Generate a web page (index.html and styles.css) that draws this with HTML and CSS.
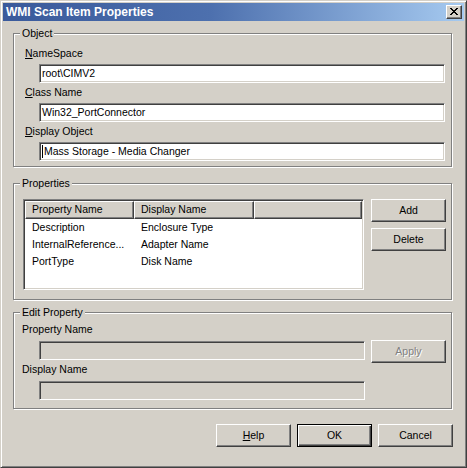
FILE: index.html
```html
<!DOCTYPE html>
<html>
<head>
<meta charset="utf-8">
<title>WMI Scan Item Properties</title>
<link rel="stylesheet" href="styles.css">
</head>
<body>
<div class="window">
  <div class="titlebar">
    <span class="title">WMI Scan Item Properties</span>
    <span class="close"><svg width="8" height="7" viewBox="0 0 8 7" shape-rendering="crispEdges"><path fill="#000" d="M0 0h2v1H0zM6 0h2v1H6zM1 1h2v1H1zM5 1h2v1H5zM2 2h4v1H2zM3 3h2v1H3zM2 4h4v1H2zM1 5h2v1H1zM5 5h2v1H5zM0 6h2v1H0zM6 6h2v1H6z"/></svg></span>
  </div>
  <div class="content">
    <div class="group group-object">
      <span class="legend">Object</span>
      <div class="field">
        <div class="label"><u>N</u>ameSpace</div>
        <div class="input">root\CIMV2</div>
      </div>
      <div class="field">
        <div class="label"><u>C</u>lass Name</div>
        <div class="input">Win32_PortConnector</div>
      </div>
      <div class="field">
        <div class="label"><u>D</u>isplay Object</div>
        <div class="input"><span class="caret"></span>Mass Storage - Media Changer</div>
      </div>
    </div>

    <div class="group group-props">
      <span class="legend">Properties</span>
      <div class="listview">
        <div class="lv-header">
          <div class="lv-col">Property Name</div>
          <div class="lv-col">Display Name</div>
          <div class="lv-col"></div>
        </div>
        <div class="lv-row"><span>Description</span><span>Enclosure Type</span></div>
        <div class="lv-row"><span>InternalReference...</span><span>Adapter Name</span></div>
        <div class="lv-row"><span>PortType</span><span>Disk Name</span></div>
      </div>
      <div class="side-buttons">
        <div class="btn">Add</div>
        <div class="btn">Delete</div>
      </div>
    </div>

    <div class="group group-edit">
      <span class="legend">Edit Property</span>
      <div class="label">Property Name</div>
      <div class="edit-row">
        <div class="input disabled"></div>
        <div class="btn btn-disabled btn-apply">Apply</div>
      </div>
      <div class="label label-2">Display Name</div>
      <div class="edit-row">
        <div class="input disabled input-short"></div>
      </div>
    </div>

    <div class="dialog-buttons">
      <div class="btn"><u>H</u>elp</div>
      <div class="btn btn-default">OK</div>
      <div class="btn">Cancel</div>
    </div>
  </div>
</div>
</body>
</html>
```

FILE: styles.css
```css
* { box-sizing: border-box; }
html, body { margin: 0; padding: 0; }
body {
  background: #d4d0c8;
  font-family: "Liberation Sans", Arial, sans-serif;
  font-size: 10.5px;
  color: #000;
}
.window {
  width: 467px;
  height: 468px;
  border: 1px solid;
  border-color: #d4d0c8 #404040 #404040 #d4d0c8;
  box-shadow: inset 1px 1px #fff, inset -1px -1px #808080;
  padding: 2px;
  display: flex;
  flex-direction: column;
  background: #d4d0c8;
}
.titlebar {
  height: 18px;
  flex: none;
  display: flex;
  align-items: center;
  justify-content: space-between;
  padding: 0 2px 0 3px;
  background: linear-gradient(to right, #3a5a9b 0%, #4d70ae 45%, #a6caf0 100%);
}
.title {
  color: #fff;
  font-weight: bold;
  font-size: 12px;
  line-height: 14px;
}
.close {
  width: 16px;
  height: 14px;
  background: #d4d0c8;
  border: 1px solid;
  border-color: #fff #404040 #404040 #fff;
  box-shadow: inset -1px -1px #808080;
  display: flex;
  align-items: center;
  justify-content: center;
  padding: 0 1px 1px 0;
}
.close svg { display: block; }
.content {
  padding: 12px 11px 0 10px;
  display: flex;
  flex-direction: column;
}
.group {
  position: relative;
  border: 1px solid #808080;
  box-shadow: 1px 1px #fff, inset 1px 1px #fff;
  margin-right: 1px;
}
.legend {
  position: absolute;
  top: -7px;
  left: 6px;
  padding: 0 2px;
  line-height: 13px;
  background: #d4d0c8;
}
.group-object {
  padding: 12px 6px 5px 0;
}
.field + .field { margin-top: 2px; }
.label {
  line-height: 14px;
  height: 14px;
  padding-left: 11px;
}
.input {
  margin-top: 4px;
  margin-left: 25px;
  height: 19px;
  background: #fff;
  border: 1px solid;
  border-color: #808080 #fff #fff #808080;
  box-shadow: inset 1px 1px #404040, inset -1px -1px #d4d0c8;
  padding: 0 2px 0 2px;
  display: flex;
  align-items: center;
  line-height: 15px;
  white-space: nowrap;
  overflow: hidden;
}
.caret {
  display: inline-block;
  width: 1px;
  height: 13px;
  background: #000;
  margin-right: 1px;
}
.group-props {
  margin-top: 16px;
  padding: 15px 5px 9px 9px;
  display: flex;
  gap: 7px;
}
.listview {
  width: 341px;
  height: 91px;
  background: #fff;
  border: 1px solid;
  border-color: #808080 #fff #fff #808080;
  box-shadow: inset 1px 1px #404040, inset -1px -1px #d4d0c8;
  padding: 1px;
}
.lv-header {
  display: grid;
  grid-template-columns: 109px 120px 1fr;
  height: 18px;
}
.lv-col {
  background: #d4d0c8;
  border: 1px solid;
  border-color: #fff #404040 #404040 #fff;
  box-shadow: inset -1px -1px #808080;
  padding-left: 6px;
  line-height: 15px;
  white-space: nowrap;
}
.lv-row {
  display: grid;
  grid-template-columns: 109px 120px 1fr;
  height: 17px;
  line-height: 17px;
  white-space: nowrap;
}
.lv-row span { padding-left: 7px; }
.side-buttons {
  display: flex;
  flex-direction: column;
  gap: 6px;
}
.btn {
  width: 75px;
  height: 23px;
  background: #d4d0c8;
  border: 1px solid;
  border-color: #fff #404040 #404040 #fff;
  box-shadow: inset -1px -1px #808080;
  display: flex;
  align-items: center;
  justify-content: center;
  line-height: 14px;
  padding-bottom: 1px;
}
.btn-default {
  border-color: #000;
  box-shadow: inset 1px 1px #fff, inset -1px -1px #404040, inset -2px -2px #808080;
}
.btn-disabled {
  color: #808080;
  text-shadow: 1px 1px #fff;
}
.group-edit {
  margin-top: 12px;
  padding: 9px 5px 8px 0;
}
.group-edit .label { padding-left: 8px; }
.group-edit .label-2 { margin-top: 2px; }
.edit-row {
  display: flex;
  align-items: flex-start;
  gap: 6px;
  margin-top: 5px;
}
.edit-row .input {
  margin-top: 0;
  width: 326px;
  flex: none;
}
.input.disabled { background: #d4d0c8; }
.btn-apply {
  margin-top: -1px;
  margin-bottom: -3px;
}
.dialog-buttons {
  margin-top: 15px;
  display: flex;
  justify-content: flex-end;
  gap: 6px;
}
```
